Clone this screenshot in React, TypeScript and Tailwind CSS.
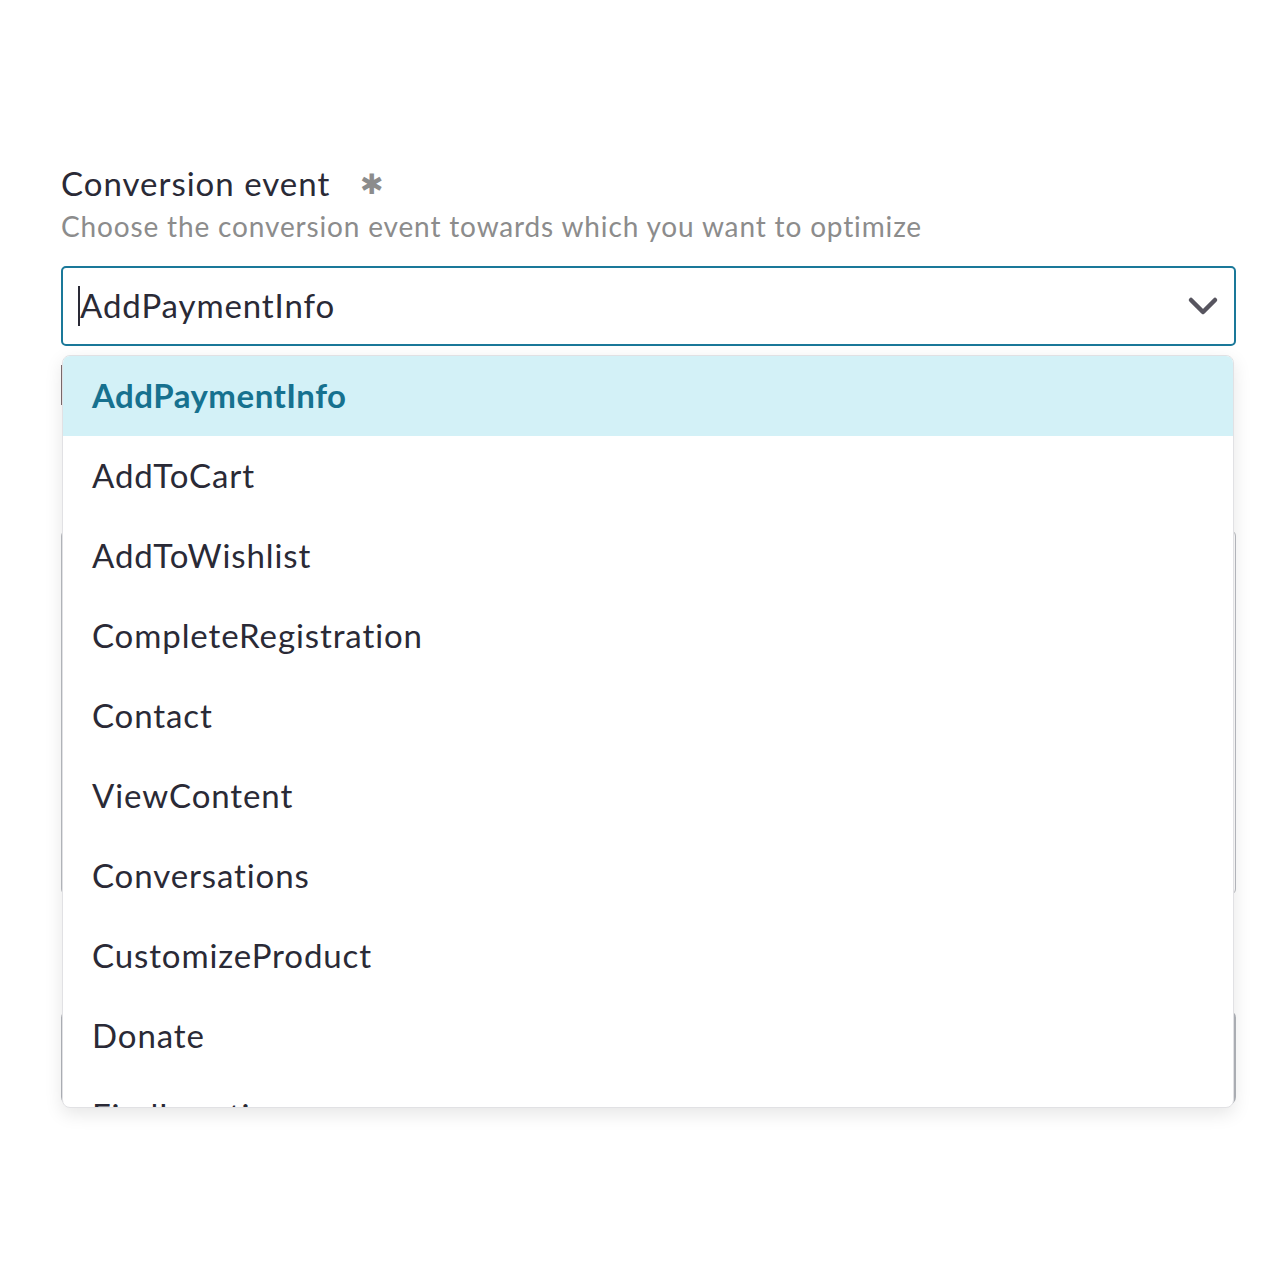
import { useState } from "react";

const OPTIONS = [
  "AddPaymentInfo",
  "AddToCart",
  "AddToWishlist",
  "CompleteRegistration",
  "Contact",
  "ViewContent",
  "Conversations",
  "CustomizeProduct",
  "Donate",
  "FindLocation",
  "InitiateCheckout",
];

function Chevron() {
  return (
    <svg viewBox="0 0 32 20" className="h-[20px] w-[32px]" fill="none">
      <path
        d="M4 4l12 12L28 4"
        stroke="#57555f"
        strokeWidth="4.5"
        strokeLinecap="round"
        strokeLinejoin="round"
      />
    </svg>
  );
}

export default function App() {
  const [value] = useState("AddPaymentInfo");

  return (
    <div
      className="min-h-[1274px] w-[1274px] bg-white pl-[61px] pt-[160px]"
      style={{ fontFamily: "Lato, 'Open Sans', sans-serif" }}
    >
      <div className="w-[1175px]">
        {/* Label */}
        <div className="flex items-center text-[33px] leading-[46px] tracking-[1px] text-[#2a2a36]">
          <span>Conversion event</span>
          <span className="ml-[30px] text-[28px] text-[#8c8c8c]">✱</span>
        </div>
        <p className="mt-[0px] text-[28px] leading-[40px] tracking-[0.85px] text-[#8c8c8c]">
          Choose the conversion event towards which you want to optimize
        </p>

        <div className="relative mt-[20px]">
          {/* Select input */}
          <div className="flex h-[80px] items-center justify-between rounded-[5px] border-2 border-[#1a7899] pl-[15px] pr-[15px]">
            <div className="flex items-center">
              <span className="h-[40px] w-[2px] bg-[#2a2a36]" />
              <span className="text-[33px] tracking-[0.9px] text-[#2a2a36]">{value}</span>
            </div>
            <Chevron />
          </div>

          {/* Underlying page content, mostly hidden by the open menu */}
          <div className="mt-[19px] h-[40px] w-[20px] border-l-2 border-[#7d6e70]" />
          <div className="mt-[125px] h-[365px] rounded-[6px] border border-[#b9bcc2]" />
          <div className="mt-[115px] h-[95px] rounded-[8px] border-2 border-[#b2b5bb]" />

          {/* Open menu */}
          <div className="absolute left-[1px] right-[2px] top-[89px] h-[753px] overflow-hidden rounded-[8px] border border-[#e1e1e4] bg-white shadow-[0_6px_18px_rgba(0,0,0,0.10)]">
            {OPTIONS.map((o) => (
              <div
                key={o}
                className={`flex h-[80px] items-center pl-[29px] text-[33px] ${
                  o === value
                    ? "bg-[#d3f1f7] font-bold tracking-[0.5px] text-[#16718f]"
                    : "tracking-[0.9px] text-[#2a2a36]"
                }`}
              >
                {o}
              </div>
            ))}
          </div>
        </div>
      </div>
    </div>
  );
}
